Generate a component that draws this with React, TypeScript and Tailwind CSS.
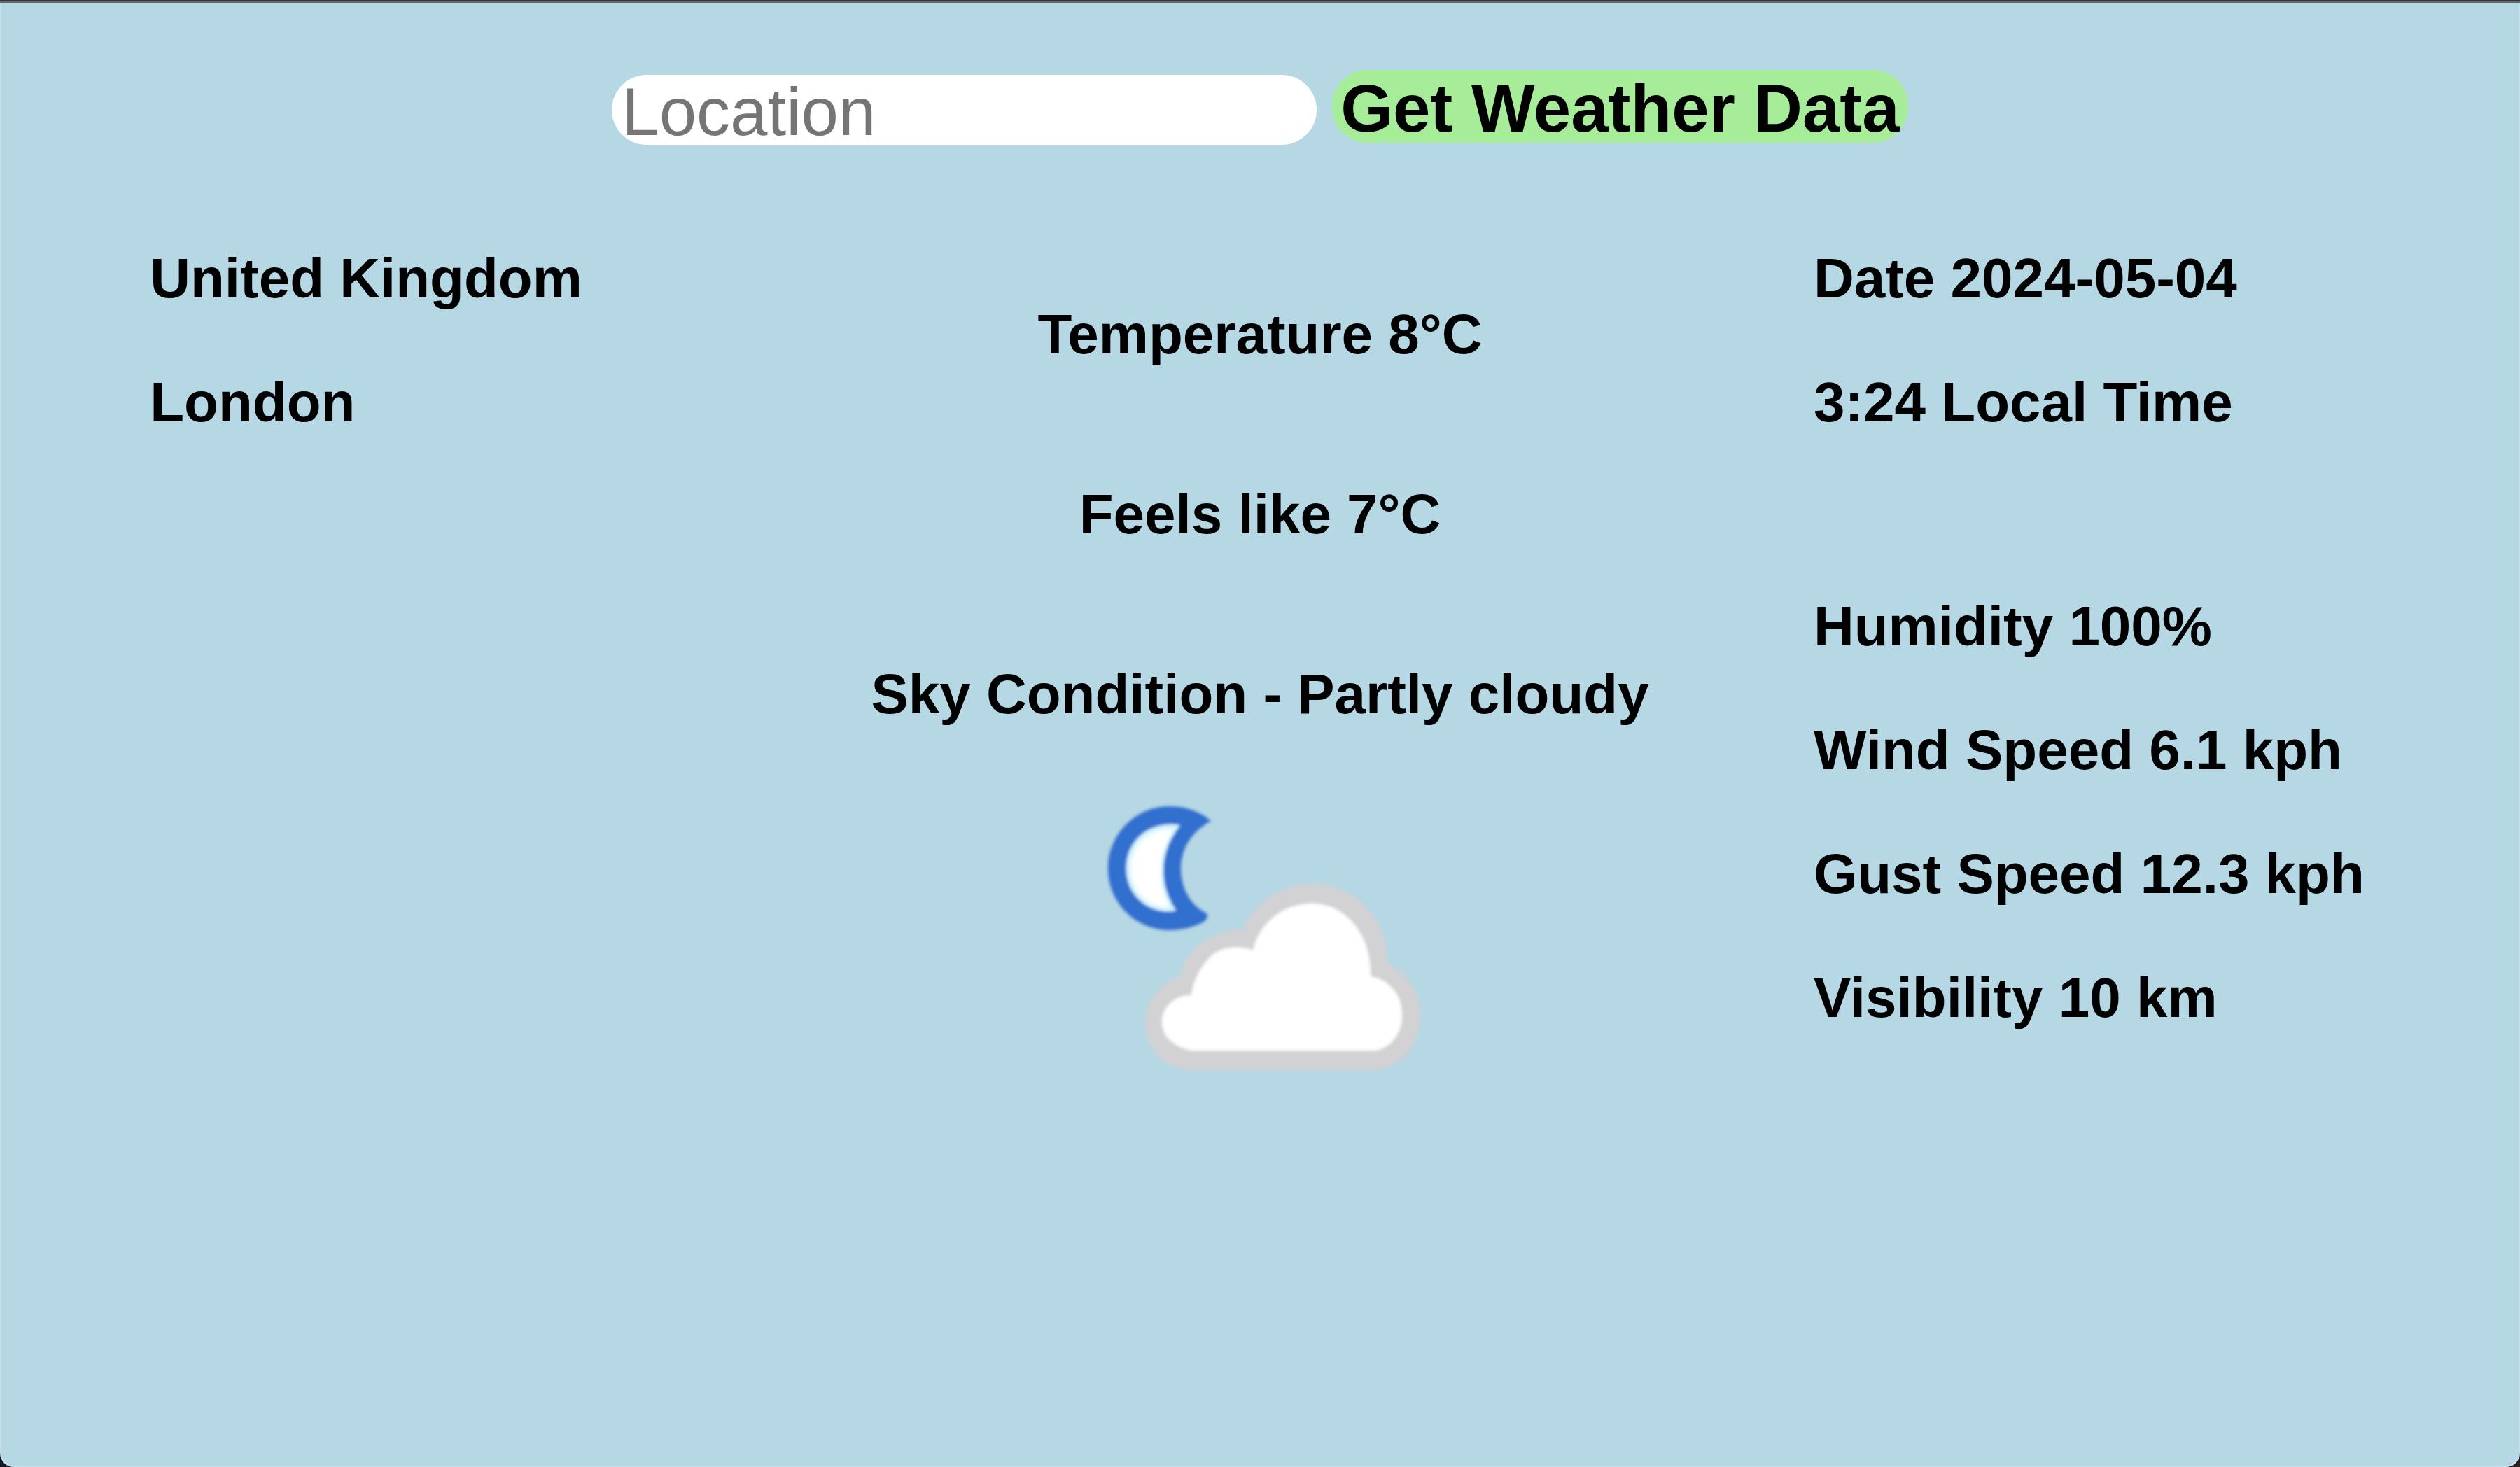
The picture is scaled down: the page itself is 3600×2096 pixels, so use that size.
import React, { useState } from "react";

const conditions = ["Temperature 8°C", "Feels like 7°C", "Sky Condition - Partly cloudy"];
const clock = ["Date 2024-05-04", "3:24 Local Time"];
const readings = ["Humidity 100%", "Wind Speed 6.1 kph", "Gust Speed 12.3 kph", "Visibility 10 km"];

function PartlyCloudyNight() {
  return (
    <svg viewBox="0 0 520 460" className="mt-[70px] w-[520px]" role="img" aria-label="Partly cloudy night">
      <defs>
        <filter id="soft" x="-5%" y="-5%" width="110%" height="110%">
          <feGaussianBlur stdDeviation="2" />
        </filter>
      </defs>
      <g filter="url(#soft)">
        <path
          d="M190 63 C174 49 153 42 131 42 C82 42 43 82 43 131 C43 180 82 219 131 219 C150 219 167 214 180 207 Q187 201 184 195 C160 184 147 158 147 131 C147 104 161 79 190 63 Z"
          fill="#3070d0"
        />
        <path
          d="M146 69 C103 62 69 90 69 131 C69 170 103 198 140 191 C115 154 115 108 146 69 Z"
          fill="#d8f6ff"
        />
        <path
          d="M136 76 C102 73 76 98 76 131 C76 164 102 187 130 185 C113 152 113 110 136 76 Z"
          fill="#ffffff"
        />
        <path
          d="M165 419 C124 419 96 388 96 350 C96 321 114 297 145 285 C156 244 190 219 235 218 C252 179 291 153 335 153 C397 153 443 204 442 266 C471 280 489 308 489 340 C489 384 460 419 420 419 Z"
          fill="#d2d2d4"
        />
        <path
          d="M160 391 C135 384 120 370 120 350 C120 331 137 311 162 312 C165 288 178 266 195 252 C212 242 232 241 250 248 C259 208 293 181 335 181 C384 181 420 228 418 285 C446 290 463 312 463 340 C463 366 448 387 425 391 Z"
          fill="#ffffff"
        />
      </g>
    </svg>
  );
}

function Lines({ items }: { items: string[] }) {
  return (
    <div className="flex flex-col gap-20">
      {items.map((item) => (
        <h2 key={item}>{item}</h2>
      ))}
    </div>
  );
}

export default function App() {
  const [location, setLocation] = useState("");

  return (
    <div className="flex min-h-screen flex-col bg-[linear-gradient(to_right,#17172a,#2b1f22)] font-['Liberation_Sans',Arial,sans-serif] text-black">
      <div className="h-0.5 bg-[#36363a]" />
      <div className="h-0.5 bg-[#68686b]" />
      <main className="flex-1 rounded-b-[20px] border-x-2 border-b-2 border-[#c4dfe9] bg-[#b6d7e4] pt-24">
        <form className="flex items-start justify-center gap-[22px]" onSubmit={(e) => e.preventDefault()}>
          <input
            type="text"
            aria-label="Location"
            placeholder="Location"
            value={location}
            onChange={(e) => setLocation(e.target.value)}
            className="mt-[7px] h-[100px] w-[28%] rounded-[50px] bg-white px-3.5 pt-1.5 text-[96px] leading-none outline-none placeholder:text-[#757575]"
          />
          <button
            type="submit"
            className="h-[104px] whitespace-nowrap rounded-[50px] bg-[#a6ec99] px-3 pt-1.5 text-[96px] font-bold leading-none"
          >
            Get Weather Data
          </button>
        </form>

        <section className="mt-[142px] grid grid-cols-[1fr_auto_1fr] px-[5.9%] text-[80px] font-bold leading-[97px]">
          <Lines items={["United Kingdom", "London"]} />
          <div className="flex flex-col items-center pt-20">
            <div className="flex flex-col items-center gap-40">
              {conditions.map((item) => (
                <h2 key={item}>{item}</h2>
              ))}
            </div>
            <PartlyCloudyNight />
          </div>
          <div className="flex flex-col gap-[223px] justify-self-end pr-2">
            <Lines items={clock} />
            <Lines items={readings} />
          </div>
        </section>
      </main>
    </div>
  );
}
